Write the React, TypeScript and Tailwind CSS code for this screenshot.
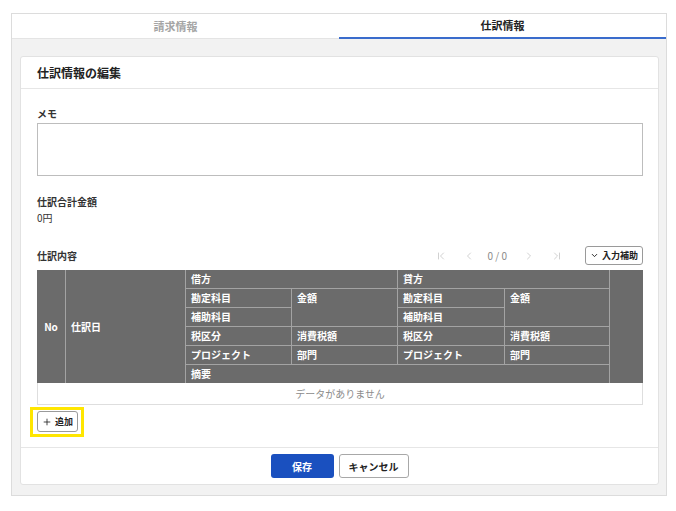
import { ChevronDown, ChevronFirst, ChevronLast, ChevronLeft, ChevronRight, Plus } from "lucide-react";

const font = { fontFamily: '"Noto Sans CJK JP", "Noto Sans", sans-serif' };

const cell = "bg-[#6b6b6b] text-white font-bold text-[10px] leading-none px-[5px] flex";

function JournalHeader() {
  return (
    <div
      className="grid gap-px bg-[#a3a3a3]"
      style={{
        gridTemplateColumns: "28px 119px 105px 105px 106px 104px 1fr",
        gridTemplateRows: "repeat(6, 18px)",
      }}>
      <div className={`${cell} col-start-1 row-start-1 row-span-6 items-center justify-center`}>No</div>
      <div className={`${cell} col-start-2 row-start-1 row-span-6 items-center`}>仕訳日</div>

      <div className={`${cell} col-start-3 col-span-2 row-start-1 items-center`}>借方</div>
      <div className={`${cell} col-start-3 row-start-2 items-center`}>勘定科目</div>
      <div className={`${cell} col-start-4 row-start-2 row-span-2 pt-[4px]`}>金額</div>
      <div className={`${cell} col-start-3 row-start-3 items-center`}>補助科目</div>
      <div className={`${cell} col-start-3 row-start-4 items-center`}>税区分</div>
      <div className={`${cell} col-start-4 row-start-4 items-center`}>消費税額</div>
      <div className={`${cell} col-start-3 row-start-5 items-center`}>プロジェクト</div>
      <div className={`${cell} col-start-4 row-start-5 items-center`}>部門</div>

      <div className={`${cell} col-start-5 col-span-2 row-start-1 items-center`}>貸方</div>
      <div className={`${cell} col-start-5 row-start-2 items-center`}>勘定科目</div>
      <div className={`${cell} col-start-6 row-start-2 row-span-2 pt-[4px]`}>金額</div>
      <div className={`${cell} col-start-5 row-start-3 items-center`}>補助科目</div>
      <div className={`${cell} col-start-5 row-start-4 items-center`}>税区分</div>
      <div className={`${cell} col-start-6 row-start-4 items-center`}>消費税額</div>
      <div className={`${cell} col-start-5 row-start-5 items-center`}>プロジェクト</div>
      <div className={`${cell} col-start-6 row-start-5 items-center`}>部門</div>

      <div className={`${cell} col-start-3 col-span-4 row-start-6 items-center`}>摘要</div>
      <div className={`${cell} col-start-7 row-start-1 row-span-6`} />
    </div>
  );
}

export default function App() {
  return (
    <div className="min-h-[511px] bg-white pt-[13px] pl-[11px] pr-[9px]" style={font}>
      <div className="border border-[#dcdcdc] bg-[#f2f2f2]">
        {/* tabs */}
        <div className="flex h-[25px] bg-white">
          <div className="flex flex-1 items-center justify-center border-b border-[#e4e4e4] text-[11px] font-bold text-[#a5a5a5]">
            請求情報
          </div>
          <div className="flex flex-1 items-center justify-center border-b-2 border-[#3a6ccc] text-[11px] font-bold text-[#222]">
            仕訳情報
          </div>
        </div>

        <div className="pb-[10px] pl-[8px] pr-[7px] pt-[17px]">
          <div className="rounded-[3px] border border-[#e2e2e2] bg-white">
            <div className="flex h-[32px] items-center border-b border-[#e6e6e6] px-[16px] text-[12px] font-bold text-[#222]">
              仕訳情報の編集
            </div>

            <div className="pb-[10px] pl-[16px] pr-[15px] pt-[18px]">
              <div className="text-[10px] font-bold leading-[14px] text-[#333]">メモ</div>
              <div className="mt-[2px] h-[53px] w-full border border-[#bdbdbd] bg-white" />

              <div className="mt-[19px] text-[10px] font-bold leading-[14px] text-[#333]">仕訳合計金額</div>
              <div className="mt-[2px] text-[10px] leading-[14px] text-[#333]">0円</div>

              <div className="mt-[21px] flex h-[19px] items-center">
                <div className="text-[10px] font-bold text-[#333]">仕訳内容</div>
                <div className="ml-auto flex items-center text-[#c2c2c2]">
                  <ChevronFirst size={12} strokeWidth={1.5} />
                  <ChevronLeft size={12} strokeWidth={1.5} className="ml-[16px]" />
                  <span className="ml-[13px] text-[10px] text-[#8a8a8a]">0 / 0</span>
                  <ChevronRight size={12} strokeWidth={1.5} className="ml-[16px]" />
                  <ChevronLast size={12} strokeWidth={1.5} className="ml-[16px]" />
                </div>
                <button className="ml-[22px] flex h-[19px] w-[58px] items-center justify-center gap-[3px] rounded-[3px] border border-[#9a9a9a] bg-white text-[9px] font-bold text-[#222]">
                  <ChevronDown size={9} strokeWidth={2.5} />
                  入力補助
                </button>
              </div>

              <div className="mt-[5px]">
                <JournalHeader />
                <div className="flex h-[22px] items-center justify-center border-x border-b border-[#dedede] text-[10px] text-[#8c8c8c]">
                  データがありません
                </div>
              </div>

              <div className="-ml-[7px] mt-[2px] w-[54px] border-[3px] border-[#ffe600] pb-[2px] pl-[4px] pt-[1px]">
                <button className="flex h-[21px] w-[41px] items-center justify-center gap-[3px] rounded-[3px] border border-[#9a9a9a] bg-white text-[9px] font-bold text-[#222]">
                  <Plus size={10} strokeWidth={2} />
                  追加
                </button>
              </div>
            </div>

            <div className="flex h-[37px] items-center justify-center gap-[5px] border-t border-[#e6e6e6]">
              <button className="h-[24px] w-[63px] rounded-[3px] bg-[#1a50bf] text-[10px] font-bold text-white">保存</button>
              <button className="h-[24px] w-[70px] rounded-[3px] border border-[#a8a8a8] bg-white text-[10px] font-bold text-[#222]">
                キャンセル
              </button>
            </div>
          </div>
        </div>
      </div>
    </div>
  );
}
